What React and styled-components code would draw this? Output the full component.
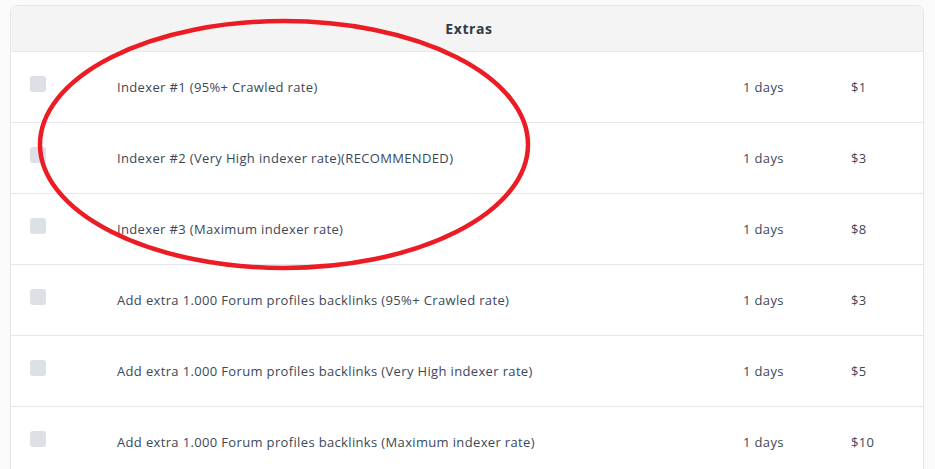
import React from "react";
import styled, { createGlobalStyle } from "styled-components";

const GlobalStyle = createGlobalStyle`
  html, body {
    margin: 0;
    background: #fafafa;
    font-family: "Open Sans", "Liberation Sans", sans-serif;
  }
`;

const extras = [
  { name: "Indexer #1 (95%+ Crawled rate)", days: "1 days", price: "$1" },
  { name: "Indexer #2 (Very High indexer rate)(RECOMMENDED)", days: "1 days", price: "$3" },
  { name: "Indexer #3 (Maximum indexer rate)", days: "1 days", price: "$8" },
  { name: "Add extra 1.000 Forum profiles backlinks (95%+ Crawled rate)", days: "1 days", price: "$3" },
  { name: "Add extra 1.000 Forum profiles backlinks (Very High indexer rate)", days: "1 days", price: "$5" },
  { name: "Add extra 1.000 Forum profiles backlinks (Maximum indexer rate)", days: "1 days", price: "$10" },
];

const App = () => {
  return <>
    <GlobalStyle />
    <Page>
      <Card>
        <Header>Extras</Header>
        {extras.map((e, i) => (
          <Row key={i}>
            <Check />
            <Cell>{e.name}</Cell>
            <Cell>{e.days}</Cell>
            <Cell>{e.price}</Cell>
          </Row>
        ))}
      </Card>
      {/* hand-drawn annotation circle */}
      <Annotation width="935" height="469" viewBox="0 0 935 469">
        <ellipse cx="284" cy="144.5" rx="244" ry="123.5" fill="none" stroke="#ec1c24" strokeWidth="4.5" />
      </Annotation>
    </Page>
  </>
}

export default App;

const Page = styled.div`
  position: relative;
  height: 469px;
  overflow: hidden;
  padding: 5px 11px 0 10px;
  box-sizing: border-box;
`

const Card = styled.div`
  background: #fff;
  border: 1px solid #e3e7ec;
  border-radius: 7px;
  overflow: hidden;
`

const Header = styled.div`
  height: 45px;
  background: #f4f4f4;
  border-bottom: 1px solid #e3e7ec;
  display: flex;
  align-items: center;
  justify-content: center;
  font-weight: 700;
  font-size: 14px;
  letter-spacing: 0.6px;
  color: #333b47;
  padding-left: 4px;
`

const Row = styled.div`
  display: grid;
  grid-template-columns: 87px 1fr 108px 72px;
  align-items: center;
  height: 70px;
  padding-left: 19px;
  border-bottom: 1px solid #e3e7ec;
`

const Check = styled.span`
  width: 16px;
  height: 16px;
  border-radius: 3px;
  background: #dde0e5;
  margin-top: -6px;
`

const Cell = styled.div`
  font-size: 13px;
  letter-spacing: 0.35px;
  color: #3b4858;
`

const Annotation = styled.svg`
  position: absolute;
  top: 0;
  left: 0;
  pointer-events: none;
`
